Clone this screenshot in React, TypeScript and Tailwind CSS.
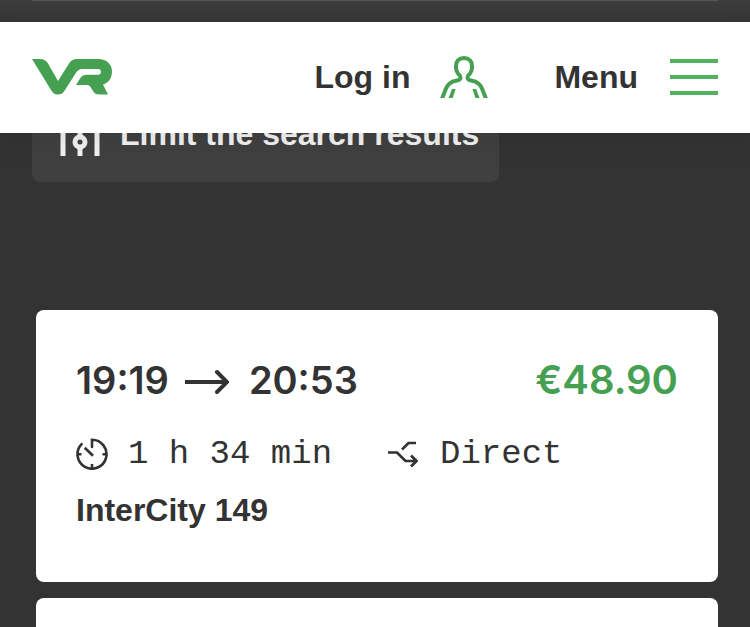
const sans = "font-['Liberation_Sans',Arial,sans-serif]";

const journeys = [
  { departs: "19:19", arrives: "20:53", price: "€48.90", duration: "1 h 34 min", changes: "Direct", train: "InterCity 149" },
];

function Logo() {
  return (
    <svg viewBox="0 0 80 36" className="h-9 w-20" fill="#45a052" role="img" aria-label="VR">
      <path d="M0 0H8C12 0 14 1.500 16 4.500L26 22L37 4.500C39 1.500 41 0 45 0H66C75 0 80 5.500 80 12.500C80 19 76.500 24 71 25.500L76 35.500H67C64 35.500 62.500 34.500 61 32L58.500 28C57.500 26.500 56.500 26 54.500 26H44L48 19.500C50 16.500 52 15.700 55 15.700H66C68 15.700 69 14.500 69 12.900C69 11 68 10 66 10H51C47 10 45.500 11.500 43.500 14.500L33 31C31 34.200 29.500 35.500 26 35.500C22.500 35.500 21 34.200 19 31Z" />
    </svg>
  );
}

function PersonIcon() {
  return (
    <svg viewBox="0 0 48 42" className="h-[42px] w-12" aria-hidden="true">
      <path
        d="M1.500 44L6 32.500C8 27.500 11 25.500 16 24.700C19.500 24.200 20.500 23.500 20.500 21.500C20.500 19.800 19.500 19.300 18 17.500C16.500 15.500 16 14 16 12V10C16 5.200 19 2 24 2C29 2 32 5.200 32 10V12C32 14 31.500 15.500 30 17.500C28.500 19.300 27.500 19.800 27.500 21.500C27.500 23.500 28.500 24.200 32 24.700C37 25.500 40 27.500 42 32.500L46.500 44"
        fill="none"
        stroke="#45a052"
        strokeWidth="4"
      />
      <path d="M12 33H15.600L12.700 42H8.600ZM32.500 33H36.100L39.500 42H35.400Z" fill="#45a052" />
    </svg>
  );
}

function FilterIcon() {
  return (
    <svg viewBox="0 0 40 44" className="h-11 w-10" fill="none" stroke="currentColor" strokeWidth="5" aria-hidden="true">
      <path d="M3 0V10M3 20V44M20 0V25M20 35V44M37 0V10M37 20V44" />
      <circle cx="3" cy="15" r="4" />
      <circle cx="20" cy="30" r="5" />
      <circle cx="37" cy="15" r="4" />
    </svg>
  );
}

function ArrowIcon() {
  return (
    <svg viewBox="0 0 44 28" className="mr-1 h-7 w-11" fill="none" stroke="currentColor" strokeWidth="4" role="img" aria-label="to">
      <path d="M0 16H42" />
      <path d="M32 6L42 16L32 26" strokeLinecap="round" />
    </svg>
  );
}

function DurationIcon() {
  return (
    <svg viewBox="0 0 32 32" className="size-8" fill="none" stroke="currentColor" strokeWidth="2.600" aria-hidden="true">
      <path d="M5.600 6.100A14.500 14.500 0 1 0 16 1.700V9" strokeLinecap="round" />
      <path d="M8.700 9.800L17 17.700M1.500 16.200H5.500M26.500 16.200H30.500M16 26V30.500" />
    </svg>
  );
}

function ChangesIcon() {
  return (
    <svg viewBox="0 0 30 26" className="h-[26px] w-[30px]" fill="none" stroke="currentColor" strokeWidth="2.700" aria-hidden="true">
      <path d="M0 11.500H9L17.500 20H28M23 14.500L28.500 20L23 25.500M14 8.500L20.500 2H28" />
    </svg>
  );
}

function Header() {
  return (
    <header className="relative z-10 flex h-[111px] items-center justify-between bg-white px-8 pb-px shadow-[0_8px_32px_rgba(0,0,0,0.08)]">
      <a href="#home" aria-label="VR home">
        <Logo />
      </a>
      <nav className="flex items-center gap-[66px] text-[32px] leading-10 font-bold">
        <button type="button" className="flex items-center gap-[30px]">
          Log in
          <PersonIcon />
        </button>
        <button type="button" className="flex items-center gap-8">
          Menu
          <span className="flex w-12 flex-col gap-3">
            <span className="h-1 bg-[#52b260]" />
            <span className="h-1 bg-[#52b260]" />
            <span className="h-1 bg-[#52b260]" />
          </span>
        </button>
      </nav>
    </header>
  );
}

function JourneyCard({ journey }: { journey: (typeof journeys)[number] }) {
  return (
    <article className="rounded-lg bg-white px-10 pt-11 pb-[52px]">
      <div className="flex items-center justify-between font-['Inter',sans-serif] leading-[52px] font-semibold">
        <div className="flex items-center gap-4 text-[38px]">
          <span>{journey.departs}</span>
          <ArrowIcon />
          <span>{journey.arrives}</span>
        </div>
        <span className="text-[40px] text-[#45a052]">{journey.price}</span>
      </div>
      <div className="mt-7 flex items-center gap-14 font-['Liberation_Mono',monospace] text-[34px] leading-10">
        <span className="flex items-center gap-5">
          <DurationIcon />
          {journey.duration}
        </span>
        <span className="flex items-center gap-[22px]">
          <ChangesIcon />
          {journey.changes}
        </span>
      </div>
      <h2 className="mt-4 text-[32px] leading-10 font-bold">{journey.train}</h2>
    </article>
  );
}

export default function App() {
  return (
    <div className={`flex min-h-screen flex-col bg-[#333333] text-[#333333] ${sans}`}>
      <div className="h-[22px] bg-linear-to-b from-[#3d3d3d] to-[#363636] px-8">
        <div className="h-px bg-[#555555]" />
      </div>
      <Header />
      <main className="-mt-12 flex flex-1 flex-col">
        <div className="px-8">
          <button
            type="button"
            className="flex h-[97px] items-center gap-5 rounded-lg bg-[#404040] pr-5 pl-7 text-[32px] leading-10 font-bold text-[#f2f2f2]"
          >
            <FilterIcon />
            Limit the search results
          </button>
        </div>
        <div className="mt-32 flex flex-1 flex-col gap-4 pr-8 pl-9">
          {journeys.map((journey) => (
            <JourneyCard key={journey.departs} journey={journey} />
          ))}
          <div className="flex-1 rounded-t-lg bg-white" />
        </div>
      </main>
    </div>
  );
}
